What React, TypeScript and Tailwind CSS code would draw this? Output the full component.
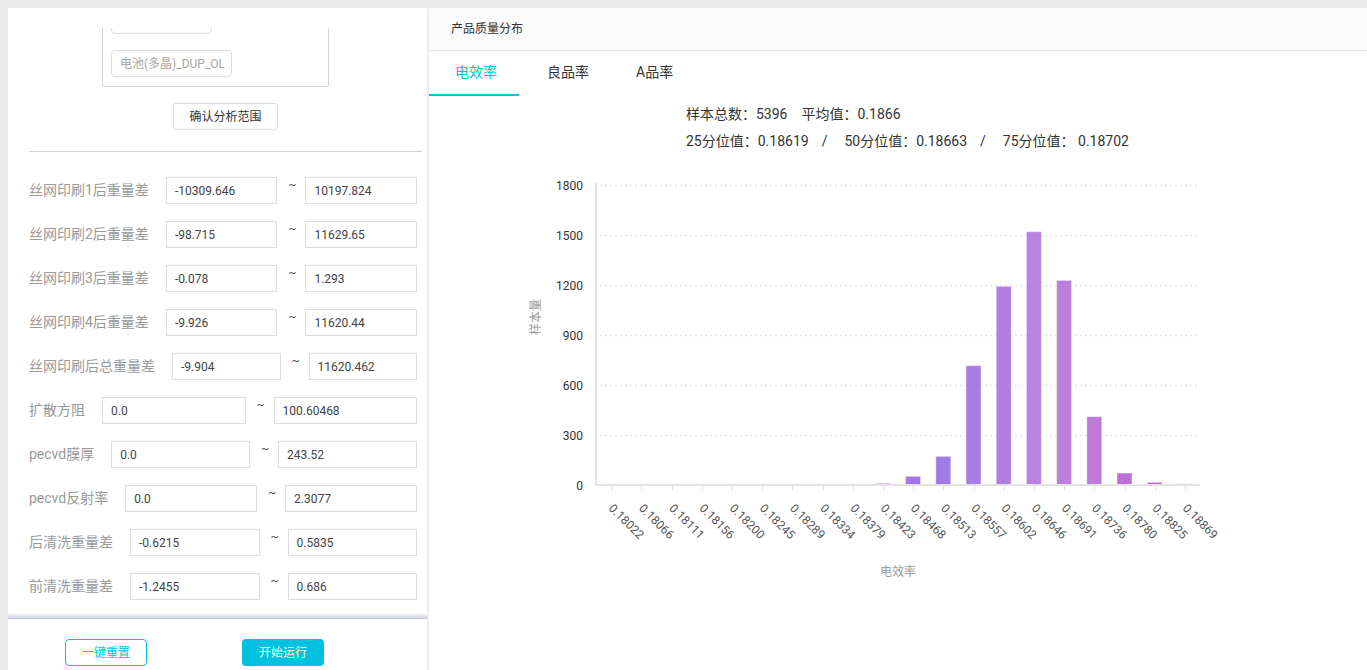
import React from "react";

const rows: [string, string, string][] = [
  ["丝网印刷1后重量差", "-10309.646", "10197.824"],
  ["丝网印刷2后重量差", "-98.715", "11629.65"],
  ["丝网印刷3后重量差", "-0.078", "1.293"],
  ["丝网印刷4后重量差", "-9.926", "11620.44"],
  ["丝网印刷后总重量差", "-9.904", "11620.462"],
  ["扩散方阻", "0.0", "100.60468"],
  ["pecvd膜厚", "0.0", "243.52"],
  ["pecvd反射率", "0.0", "2.3077"],
  ["后清洗重量差", "-0.6215", "0.5835"],
  ["前清洗重量差", "-1.2455", "0.686"],
];

const cats = [
  "0.18022", "0.18066", "0.18111", "0.18156", "0.18200", "0.18245", "0.18289",
  "0.18334", "0.18379", "0.18423", "0.18468", "0.18513", "0.18557", "0.18602",
  "0.18646", "0.18691", "0.18736", "0.18780", "0.18825", "0.18869",
];
const values = [2, 0, 1, 0, 0, 0, 0, 1, 3, 10, 52, 172, 716, 1192, 1520, 1228, 410, 72, 16, 7];
const colors = [
  "#a9a6ef", "#a9a6ef", "#a9a6ef", "#a9a6ef", "#a9a6ef", "#a9a6ef", "#d8a6e6",
  "#e0a0e0", "#e0a0e0", "#c66fd6", "#a574e8", "#a07be6", "#a87de3", "#b07ddf",
  "#b883df", "#bb7ed9", "#bd78d8", "#bf6ed8", "#c26ad5", "#c466d3",
];

function Chart() {
  const ax = 167;
  const axEnd = 771;
  const band = (axEnd - ax) / cats.length;
  const y0 = 330;
  const k = 300 / 1800;
  const ticks = [0, 300, 600, 900, 1200, 1500, 1800];
  return (
    <svg width={938} height={440} className="block">
      {ticks.map((t) => {
        const y = Math.round(y0 - t * k) + 0.5;
        return (
          <g key={t}>
            {t > 0 && (
              <line x1={ax + 4} x2={axEnd} y1={y} y2={y} stroke="#e2e2e2" strokeWidth={1.5} strokeDasharray="2 3" />
            )}
            <text x={154} y={y} textAnchor="end" dominantBaseline="central" fontSize={12} fill="#333">
              {t}
            </text>
          </g>
        );
      })}
      <text
        x={107}
        y={162}
        transform="rotate(-90 107 162)"
        textAnchor="middle"
        dominantBaseline="central"
        fontSize={12}
        fill="#999"
      >
        样本量
      </text>
      {values.map((v, i) => {
        const cx = ax + band * (i + 0.5);
        const h = v * k;
        return v > 0 ? (
          <rect
            key={i}
            x={cx - 7.5}
            y={y0 - h}
            width={15}
            height={h}
            fill={colors[i]}
            stroke="rgba(255,255,255,0.45)"
            strokeWidth={1}
          />
        ) : null;
      })}
      <line x1={ax} x2={ax} y1={y0 - 300 - 2} y2={y0 + 1} stroke="#e3e3e3" strokeWidth={2} />
      <line x1={ax} x2={axEnd} y1={y0} y2={y0} stroke="#e3e3e3" strokeWidth={2} />
      {cats.map((c, i) => {
        const cx = Math.round(ax + band * (i + 0.5)) + 0.5;
        const tx = ax + band * (i + 0.5) - 3;
        const ty = 354;
        return (
          <g key={c}>
            <line x1={cx} x2={cx} y1={y0 + 1} y2={y0 + 6} stroke="#ddd" strokeWidth={1} />
            <text x={tx} y={ty} transform={`rotate(45 ${tx} ${ty})`} fontSize={12} fill="#555">
              {c}
            </text>
          </g>
        );
      })}
      <text x={469} y={417} textAnchor="middle" dominantBaseline="central" fontSize={12} fill="#999">
        电效率
      </text>
    </svg>
  );
}

export default function App() {
  return (
    <div className="w-[1367px] h-[670px] overflow-hidden bg-[#ebebeb] font-[Roboto,'Noto_Sans_CJK_SC',sans-serif] flex pt-[8px] pl-[8px]">
      {/* Left panel */}
      <div className="w-[419px] h-[662px] bg-white flex flex-col shrink-0">
        <div className="h-[20px] bg-white shrink-0 relative z-10" />
        <div className="h-[585px] overflow-hidden shrink-0">
          <div className="-mt-[30px]">
            <div className="ml-[94px] w-[227px] border border-[#d4d4d4] rounded-[2px] pt-[8px] pb-[9px] pl-[8px]">
              <div className="w-[101px] h-[27px] border border-[#ddd] rounded-[4px]" />
              <div className="mt-[16px] w-[121px] h-[27px] border border-[#ddd] rounded-[4px] flex items-center pl-[8px] text-[12px] text-[#a5a5a5] whitespace-nowrap">
                电池(多晶)_DUP_OL
              </div>
            </div>
            <div className="mt-[16px] ml-[165px] w-[105px] h-[27px] border border-[#ddd] rounded-[3px] flex items-center justify-center text-[12px] text-[#333]">
              确认分析范围
            </div>
            <div className="mt-[21px] ml-[21px] mr-[5px] h-px bg-[#d2d2d2]" />
            <div className="mt-[25px] flex flex-col gap-[17px] pl-[21px] pr-[10px]">
              {rows.map(([label, a, b]) => (
                <div key={label} className="flex items-center h-[27px]">
                  <div className="mr-[17px] text-[14px] text-[#999] whitespace-nowrap">{label}</div>
                  <div className="flex-1 min-w-0 h-[27px] border border-[#ddd] flex items-center pl-[8px] text-[12px] text-[#444]">
                    {a}
                  </div>
                  <div className="w-[28px] h-[27px] pl-[2px] pt-[1px] text-center text-[12px] text-[#555] leading-[14px]">~</div>
                  <div className="flex-1 min-w-0 h-[27px] border border-[#ddd] flex items-center pl-[8px] text-[12px] text-[#444]">
                    {b}
                  </div>
                </div>
              ))}
            </div>
          </div>
        </div>
        <div className="h-[6px] shrink-0 bg-gradient-to-b from-white to-[#c4c9d8]" />
        <div className="flex-1 flex items-start pt-[20px] pl-[57px]">
          <div className="w-[82px] h-[27px] border border-[#00c1de] rounded-[4px] flex items-center justify-center text-[12px] text-[#00c1de]">
            一键重置
          </div>
          <div className="ml-[95px] w-[82px] h-[27px] bg-[#00c1de] rounded-[4px] flex items-center justify-center text-[12px] text-white">
            开始运行
          </div>
        </div>
      </div>
      {/* Right panel */}
      <div className="ml-[2px] w-[938px] h-[662px] bg-white flex flex-col shrink-0">
        <div className="h-[43px] bg-[#fafafa] border-b border-[#e4e4e4] shadow-[0_1px_2px_rgba(0,0,0,0.04)] flex items-center pl-[22px] text-[12px] text-[#333] shrink-0">
          产品质量分布
        </div>
        <div className="h-[45px] flex items-stretch text-[14px] shrink-0">
          <div className="w-[90px] flex items-center justify-center pl-[4px] text-[#00c1de] border-b-2 border-[#00c1de]">电效率</div>
          <div className="ml-[28px] flex items-center text-[#333] pb-[2px]">良品率</div>
          <div className="ml-[47px] flex items-center text-[#333] pb-[2px]">A品率</div>
        </div>
        <div className="pl-[257px] pt-[5px] text-[14px] text-[#333] leading-[27px] whitespace-nowrap">
          <div>
            样本总数：5396<span className="ml-[14px]">平均值：0.1866</span>
          </div>
          <div>
            25分位值：0.18619<span className="ml-[13px] mr-[17px]">/</span>50分位值：0.18663
            <span className="ml-[13px] mr-[17px]">/</span>75分位值： 0.18702
          </div>
        </div>
        <Chart />
      </div>
    </div>
  );
}
